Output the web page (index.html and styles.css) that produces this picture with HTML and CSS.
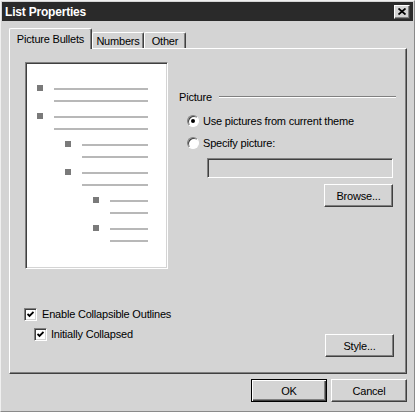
FILE: index.html
```html
<!DOCTYPE html>
<html>
<head>
<meta charset="utf-8">
<link rel="stylesheet" href="styles.css">
</head>
<body>
<div class="window">
  <div class="titlebar">
    <span class="title">List Properties</span>
    <span class="close"><svg width="8" height="7" viewBox="0 0 8 7"><path d="M0.5 0.5 L7.5 6.5 M7.5 0.5 L0.5 6.5" stroke="#000" stroke-width="1.8" fill="none"/></svg></span>
  </div>
  <div class="content">
    <div class="tabs">
      <div class="tab active">Picture Bullets</div>
      <div class="tab tab-numbers">Numbers</div>
      <div class="tab tab-other">Other</div>
    </div>
    <div class="panel">
      <div class="top">
        <div class="preview">
          <div class="item"><span class="bullet"></span><div class="lines"><div class="line"></div><div class="line"></div></div></div>
          <div class="item"><span class="bullet"></span><div class="lines"><div class="line"></div><div class="line"></div></div></div>
          <div class="item level2"><span class="bullet"></span><div class="lines"><div class="line"></div><div class="line"></div></div></div>
          <div class="item level2"><span class="bullet"></span><div class="lines"><div class="line"></div><div class="line"></div></div></div>
          <div class="item level3"><span class="bullet"></span><div class="lines"><div class="line"></div><div class="line"></div></div></div>
          <div class="item level3"><span class="bullet"></span><div class="lines"><div class="line"></div><div class="line"></div></div></div>
        </div>
        <div class="group">
          <div class="group-label"><span>Picture</span><span class="rule"></span></div>
          <div class="radio-row first"><span class="radio checked"></span><span>Use pictures from current theme</span></div>
          <div class="radio-row"><span class="radio"></span><span>Specify picture:</span></div>
          <div class="textbox"></div>
          <div class="btn-row"><button class="btn">Browse...</button></div>
        </div>
      </div>
      <div class="bottom">
        <div class="checks">
          <div class="check-row row1"><span class="checkbox"><svg width="7" height="7" viewBox="0 0 7 7"><path d="M0.5 3 L2.5 5 L6.5 1" stroke="#000" stroke-width="1.8" fill="none"/></svg></span><span>Enable Collapsible Outlines</span></div>
          <div class="check-row row2"><span class="checkbox"><svg width="7" height="7" viewBox="0 0 7 7"><path d="M0.5 3 L2.5 5 L6.5 1" stroke="#000" stroke-width="1.8" fill="none"/></svg></span><span>Initially Collapsed</span></div>
        </div>
        <button class="btn style-btn">Style...</button>
      </div>
    </div>
    <div class="footer">
      <button class="btn wide default">OK</button>
      <button class="btn wide">Cancel</button>
    </div>
  </div>
</div>
</body>
</html>
```
FILE: styles.css
```css
* { box-sizing: border-box; }
html, body { margin: 0; padding: 0; background: #d4d4d4; }
body {
  font-family: "Liberation Sans", Arial, sans-serif;
  font-size: 11px;
  letter-spacing: -0.2px;
  color: #000;
}
.window {
  width: 415px;
  height: 412px;
  background: #d4d4d4;
  border: 1px solid;
  border-color: #f0f0f0 #8a8a8a #8a8a8a #f0f0f0;
  padding: 1px;
  display: flex;
  flex-direction: column;
}
.titlebar {
  height: 19px;
  background: #2a2a2a;
  display: flex;
  align-items: center;
  padding-left: 3px;
}
.title {
  color: #fff;
  font-weight: bold;
  font-size: 12px;
  letter-spacing: -0.2px;
}
.close {
  margin-left: auto;
  margin-right: 3px;
  width: 16px;
  height: 14px;
  background: #d4d4d4;
  border: 1px solid;
  border-color: #fff #404040 #404040 #fff;
  box-shadow: inset -1px -1px 0 #808080;
  display: flex;
  align-items: center;
  justify-content: center;
}
.content {
  flex: 1;
  padding: 7px 6px 0 7px;
  display: flex;
  flex-direction: column;
}
.tabs {
  display: flex;
  align-items: flex-end;
  margin-bottom: -1px;
  height: 21px;
}
.tab {
  background: #d4d4d4;
  border-top: 1px solid #fff;
  border-left: 1px solid #fff;
  border-right: 1px solid #404040;
  box-shadow: inset -1px 0 0 #808080;
  border-radius: 2px 2px 0 0;
  text-align: center;
  height: 16px;
  margin-bottom: 1px;
  padding-top: 2px;
  line-height: 13px;
}
.tab.active {
  width: 83px;
  height: 21px;
  margin-bottom: 0;
  padding-top: 4px;
  position: relative;
  z-index: 1;
}
.tab-numbers { width: 52px; }
.tab-other { width: 42px; }
.panel {
  height: 326px;
  border: 1px solid;
  border-color: #fff #404040 #404040 #fff;
  box-shadow: inset -1px -1px 0 #808080;
  padding: 13px 10px 16px 15px;
  display: flex;
  flex-direction: column;
}
.top { display: flex; }
.preview {
  flex: none;
  width: 143px;
  height: 207px;
  background: #fff;
  border: 1px solid;
  border-color: #808080 #fff #fff #808080;
  box-shadow: inset 1px 1px 0 #404040, inset -1px -1px 0 #d4d4d4;
  padding: 22px 19px 0 11px;
}
.item {
  display: flex;
  height: 28px;
}
.item.level2 { margin-left: 28px; }
.item.level3 { margin-left: 56px; }
.bullet {
  flex: none;
  width: 6px;
  height: 6px;
  background: #7a7a7a;
}
.lines { flex: 1; margin-left: 11px; }
.line { height: 2px; background: #b8b8b8; margin-top: 3px; }
.line + .line { margin-top: 10px; }
.group {
  flex: 1;
  margin-left: 11px;
  margin-top: 28px;
  display: flex;
  flex-direction: column;
}
.group-label {
  height: 14px;
  display: flex;
  align-items: center;
}
.rule {
  flex: 1;
  margin-left: 7px;
  height: 2px;
  border-top: 1px solid #808080;
  border-bottom: 1px solid #fff;
}
.radio-row {
  height: 22px;
  display: flex;
  align-items: center;
  padding-left: 8px;
}
.radio-row.first { margin-top: 6px; }
.radio {
  flex: none;
  width: 12px;
  height: 12px;
  border-radius: 50%;
  background: #fff;
  border: 1px solid;
  border-color: #808080 #fff #fff #808080;
  box-shadow: inset 1px 1px 0 #404040;
  margin-right: 4px;
  display: flex;
  align-items: center;
  justify-content: center;
}
.radio.checked::after {
  content: "";
  width: 4px;
  height: 4px;
  border-radius: 50%;
  background: #000;
}
.textbox {
  margin-top: 4px;
  margin-left: 28px;
  margin-right: 3px;
  height: 20px;
  background: #d4d4d4;
  border: 1px solid;
  border-color: #808080 #fff #fff #808080;
  box-shadow: inset 1px 1px 0 #404040, inset -1px -1px 0 #d4d4d4;
}
.btn-row {
  display: flex;
  justify-content: flex-end;
  margin-top: 6px;
  margin-right: 3px;
}
.btn {
  width: 69px;
  height: 23px;
  background: #d4d4d4;
  border: 1px solid;
  border-color: #fff #404040 #404040 #fff;
  box-shadow: inset -1px -1px 0 #808080;
  font: inherit;
  letter-spacing: inherit;
  color: #000;
  padding: 0;
}
.bottom {
  margin-top: auto;
  display: flex;
  align-items: flex-end;
  justify-content: space-between;
}
.checks {
  margin-bottom: 13px;
}
.check-row {
  height: 20px;
  display: flex;
  align-items: center;
}
.row1 { margin-left: -1px; }
.row1 .checkbox { margin-right: 5px; }
.row2 { margin-left: 9px; }
.row2 .checkbox { margin-right: 4px; }
.checkbox {
  flex: none;
  width: 13px;
  height: 13px;
  background: #fff;
  border: 1px solid;
  border-color: #808080 #fff #fff #808080;
  box-shadow: inset 1px 1px 0 #404040, inset -1px -1px 0 #d4d4d4;
  display: flex;
  align-items: center;
  justify-content: center;
}
.style-btn { margin-right: 2px; }
.footer {
  display: flex;
  justify-content: flex-end;
  gap: 4px;
  margin-top: 5px;
}
.btn.wide { width: 76px; }
.btn.default {
  border-color: #000;
  box-shadow: inset 1px 1px 0 #fff, inset -1px -1px 0 #404040, inset -2px -2px 0 #808080;
}
```
